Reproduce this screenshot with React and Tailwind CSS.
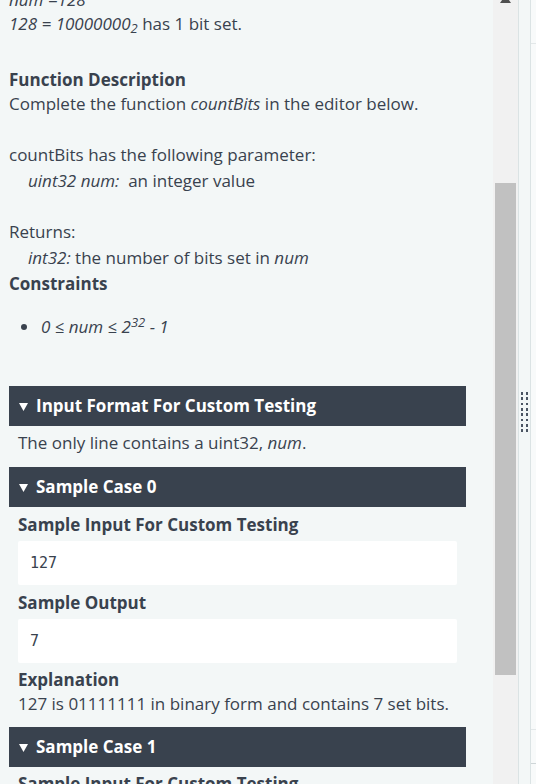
const SectionHeader = ({ title, className = "" }) => (
  <div
    className={`flex h-10 items-center gap-[8px] bg-[#39424e] pl-[10px] text-[17px] font-bold text-white ${className}`}
  >
    <svg width="9" height="8" viewBox="0 0 9 8" className="mt-[1px]">
      <path d="M0 0 L9 0 L4.5 8 Z" fill="#ffffff" />
    </svg>
    <span>{title}</span>
  </div>
);

const CodeBox = ({ value }) => (
  <div className="flex h-11 w-[439px] items-center rounded-[2px] bg-white pl-3 font-['DejaVu_Sans_Mono',monospace] text-[15px] text-[#39424e]">
    {value}
  </div>
);

const App = () => {
  return (
    <div className="flex h-[784px] w-[536px] overflow-hidden bg-[#f3f7f7] font-['Open_Sans',sans-serif] text-[17px] text-[#39424e]">
      {/* problem statement */}
      <div className="w-[493px] shrink-0 overflow-hidden">
        <div className="-mt-3 pl-[9px]">
          <p className="h-6 leading-6 italic">num =128</p>
          <p className="h-6 leading-6">
            <i>
              128 = 10000000<sub className="text-[13px]">2</sub>
            </i>{" "}
            has 1 bit set.
          </p>

          <p className="mt-8 h-6 font-bold leading-6">Function Description</p>
          <p className="h-6 leading-6">
            Complete the function <i>countBits</i> in the editor below.
          </p>

          <p className="mt-[26px] leading-[26px]">countBits has the following parameter:</p>
          <p className="pl-[19px] leading-[26px]">
            <i>uint32 num:</i>&nbsp; an integer value
          </p>

          <p className="mt-[25px] leading-[26px]">Returns:</p>
          <p className="pl-[19px] leading-[26px]">
            <i>int32:</i> the number of bits set in <i>num</i>
          </p>
          <p className="font-bold leading-[26px]">Constraints</p>

          <ul className="mt-[18px] list-disc pl-[31px] leading-6 marker:text-[#39424e]">
            <li className="pl-[1px] italic">
              0 ≤ num ≤ 2<sup className="text-[13px]">32</sup> - 1
            </li>
          </ul>
        </div>

        <div className="mt-[47px] w-[466px] pl-[9px]">
          <SectionHeader title="Input Format For Custom Testing" />
          <p className="mt-[5px] h-6 pl-[9px] leading-6">
            The only line contains a uint32, <i>num</i>.
          </p>

          <SectionHeader title="Sample Case 0" className="mt-[12px]" />
          <div className="pl-[9px]">
            <p className="mt-[6px] h-6 font-bold leading-6">Sample Input For Custom Testing</p>
            <div className="mt-1">
              <CodeBox value="127" />
            </div>
            <p className="mt-[6px] h-6 font-bold leading-6">Sample Output</p>
            <div className="mt-1">
              <CodeBox value="7" />
            </div>
            <p className="mt-[5px] h-6 font-bold leading-6">Explanation</p>
            <p className="h-6 leading-6">127 is 01111111 in binary form and contains 7 set bits.</p>
          </div>

          <SectionHeader title="Sample Case 1" className="mt-[11px]" />
          <p className="mt-[5px] h-6 pl-[9px] font-bold leading-6">Sample Input For Custom Testing</p>
        </div>
      </div>

      {/* scrollbar */}
      <div className="relative w-[25px] shrink-0 bg-[#f1f1f1]">
        <svg className="absolute left-[7px] top-[-5px]" width="11" height="8" viewBox="0 0 11 8">
          <path d="M5.5 0 L11 8 L0 8 Z" fill="#505050" />
        </svg>
        <div className="absolute left-[2px] top-[183px] h-[492px] w-[21px] bg-[#c1c1c1]" />
      </div>

      {/* splitter */}
      <div className="flex w-[13px] shrink-0 items-center justify-center border-x border-[#dbe3e4] bg-[#f3f7f7]">
        <div className="mt-[40px] grid grid-cols-2 gap-x-[2.5px] gap-y-[2.6px]">
          {Array.from({ length: 16 }).map((_, i) => (
            <span key={i} className="block h-[2.7px] w-[2.7px] bg-[#4b5563]" />
          ))}
        </div>
      </div>

      {/* editor edge */}
      <div className="flex w-[5px] shrink-0 flex-col bg-[#f8fafa]">
        <div className="mt-[43px] h-px bg-[#e3e8e9]" />
        <div className="mt-[685px] h-px bg-[#e3e8e9]" />
        <div className="mt-[33px] h-px bg-[#cfd6d8]" />
      </div>
    </div>
  );
};

export default App;
